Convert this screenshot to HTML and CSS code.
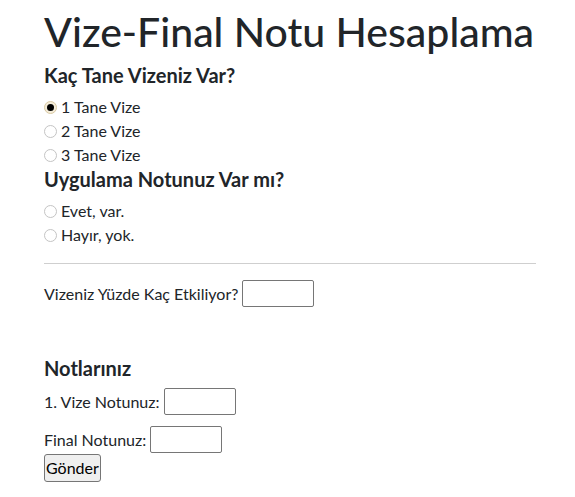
FILE: index.html
```html
<!DOCTYPE html>
<html lang="tr">
<head>
<meta charset="utf-8">
<title>Vize-Final Notu Hesaplama</title>
<link rel="stylesheet" href="styles.css">
</head>
<body>
<div class="container">
  <h1 class="title">Vize-Final Notu Hesaplama</h1>
  <form class="form">
    <h4 class="heading">Kaç Tane Vizeniz Var?</h4>
    <div class="options">
      <label class="option"><input type="radio" name="vize" class="radio" checked><span>1 Tane Vize</span></label>
      <label class="option"><input type="radio" name="vize" class="radio"><span>2 Tane Vize</span></label>
      <label class="option"><input type="radio" name="vize" class="radio"><span>3 Tane Vize</span></label>
    </div>
    <h4 class="heading heading-tight">Uygulama Notunuz Var mı?</h4>
    <div class="options">
      <label class="option"><input type="radio" name="uygulama" class="radio"><span>Evet, var.</span></label>
      <label class="option"><input type="radio" name="uygulama" class="radio"><span>Hayır, yok.</span></label>
    </div>
    <hr class="divider">
    <div class="field">
      <label class="field-label">Vizeniz Yüzde Kaç Etkiliyor?</label>
      <input type="text" class="box">
    </div>
    <h4 class="heading heading-notes">Notlarınız</h4>
    <div class="field field-spaced">
      <label class="field-label">1. Vize Notunuz:</label>
      <input type="text" class="box">
    </div>
    <div class="field">
      <label class="field-label">Final Notunuz:</label>
      <input type="text" class="box">
    </div>
    <button type="button" class="submit">Gönder</button>
  </form>
</div>
</body>
</html>
```
FILE: styles.css
```css
* { box-sizing: border-box; }

body {
  margin: 0;
  font-family: Lato, "Open Sans", sans-serif;
  font-size: 16px;
  line-height: 24px;
  color: #212529;
  background: #fff;
}

.container {
  width: 536px;
  padding: 8px 0 0 44px;
}

.title {
  margin: 0 0 7px;
  font-size: 41px;
  line-height: 48px;
  font-weight: 500;
  white-space: nowrap;
}

.form {
  display: flex;
  flex-direction: column;
  align-items: flex-start;
}

.heading {
  margin: 0 0 8px;
  font-size: 20px;
  line-height: 24px;
  font-weight: 700;
}

.heading-tight { margin-top: 0; }

.heading-notes { margin-top: 49px; }

.options {
  display: flex;
  flex-direction: column;
}

.option {
  display: flex;
  align-items: center;
  height: 24px;
}

.radio {
  appearance: none;
  -webkit-appearance: none;
  width: 13px;
  height: 13px;
  margin: 0 4px 0 0;
  border: 1px solid #c4c4c4;
  border-radius: 50%;
  background: #fff;
  display: grid;
  place-items: center;
}

.radio:checked {
  border-color: #d9c9a3;
  background: #f4ecd9;
}

.radio:checked::after {
  content: "";
  width: 7px;
  height: 7px;
  border-radius: 50%;
  background: #000;
}

.divider {
  align-self: stretch;
  margin: 16px 0;
  border: 0;
  border-top: 1px solid #cfcfcf;
}

.field {
  display: flex;
  align-items: center;
  gap: 4px;
}

.field-spaced { margin-bottom: 11px; }

.box {
  width: 72px;
  height: 27px;
  margin: 0;
  padding: 1px 2px;
  border: 1px solid #767676;
  border-radius: 2px;
  font: inherit;
  background: #fff;
}

.submit {
  margin: 1px 0 0;
  height: 28px;
  padding: 1px 1px;
  border: 1px solid #767676;
  border-radius: 3px;
  background: #efefef;
  font: inherit;
  color: #000;
}
```
